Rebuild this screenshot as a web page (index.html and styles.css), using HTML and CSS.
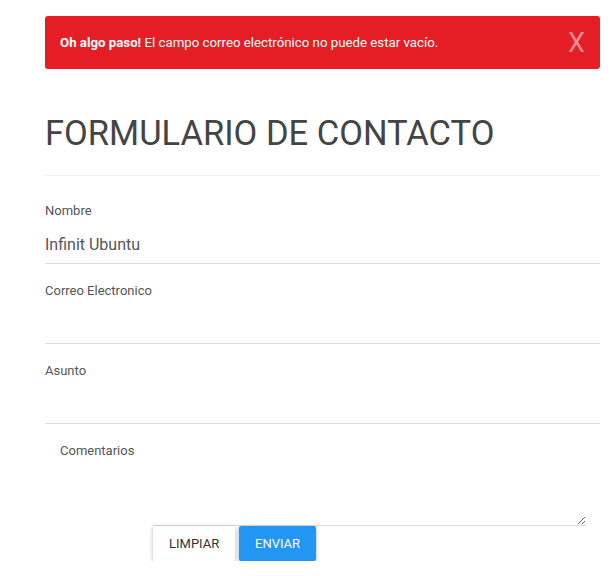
FILE: index.html
```html
<!DOCTYPE html>
<html lang="es">
<head>
<meta charset="utf-8">
<link rel="stylesheet" href="styles.css">
</head>
<body>
<div class="page">
  <div class="alert">
    <p class="alert-text"><strong>Oh algo paso!</strong> El campo correo electrónico no puede estar vacío.</p>
    <span class="alert-close">X</span>
  </div>
  <h1 class="title">FORMULARIO DE CONTACTO</h1>
  <hr class="divider">
  <form class="form">
    <div class="field field-first">
      <label class="field-label">Nombre</label>
      <input class="field-input" type="text" value="Infinit Ubuntu">
    </div>
    <div class="field">
      <label class="field-label">Correo Electronico</label>
      <input class="field-input" type="text">
    </div>
    <div class="field">
      <label class="field-label">Asunto</label>
      <input class="field-input" type="text">
    </div>
    <div class="field field-area">
      <label class="field-label area-label">Comentarios</label>
      <textarea class="field-textarea"></textarea>
    </div>
    <div class="actions">
      <button type="button" class="btn btn-default">LIMPIAR</button>
      <button type="button" class="btn btn-primary">ENVIAR</button>
    </div>
  </form>
</div>
</body>
</html>
```
FILE: styles.css
```css
* { box-sizing: border-box; }
html, body { margin: 0; padding: 0; background: #fff; }
body { font-family: Roboto, "Liberation Sans", sans-serif; color: #555; }
.page { width: 555px; margin-left: 45px; padding-top: 16px; }
.alert {
  height: 53px;
  background: #e51d25;
  border-radius: 3px;
  display: flex;
  align-items: center;
  justify-content: space-between;
  padding: 0 15px;
  color: #fff;
}
.alert-text { margin: 0; font-size: 13.25px; }
.alert-text strong { font-weight: 700; }
.alert-close { font-size: 27px; color: rgba(255,255,255,0.5); line-height: 1; padding-top: 2px; }
.title {
  margin: 46px 0 0;
  font-size: 34.5px;
  font-weight: 400;
  color: #444;
  line-height: 1.1;
}
.divider { margin: 22px 0 0; border: 0; border-top: 1px solid #eee; }
.form { margin: 0; }
.field { display: flex; flex-direction: column; height: 80px; border-bottom: 1px solid #ddd; padding-top: 19px; }
.field-first { height: 88px; padding-top: 27px; }
.field-label { font-size: 13px; color: #555; line-height: 16px; }
.field-input {
  border: 0; outline: 0; padding: 0; margin-top: 15px;
  font-family: Roboto, "Liberation Sans", sans-serif; font-size: 16px; color: #555;
  height: 22px; background: transparent;
}
.field-area { height: auto; border-bottom: 0; padding-top: 19px; }
.area-label { padding-left: 15px; }
.field-textarea {
  margin: 0 0 0 108px;
  width: 433px; height: 67px;
  border: 0; border-bottom: 1px solid #ddd; outline: 0;
  resize: vertical; display: block;
}
.actions { display: flex; gap: 4px; margin-left: 108px; }
.btn {
  height: 35px; border: 0; border-radius: 2px;
  font-family: Roboto, "Liberation Sans", sans-serif; font-size: 13px;
  padding: 0 16px; box-shadow: 0 1px 4px rgba(0,0,0,0.28);
}
.btn-default { background: #fff; color: #333; width: 82px; }
.btn-primary { background: #2196f3; color: #fff; width: 77px; }
```
